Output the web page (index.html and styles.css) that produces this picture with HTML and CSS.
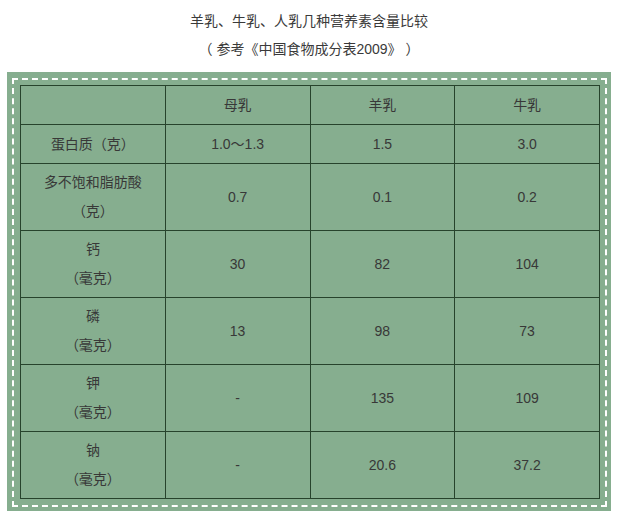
FILE: index.html
```html
<!DOCTYPE html>
<html lang="zh">
<head>
<meta charset="utf-8">
<link rel="stylesheet" href="styles.css">
</head>
<body>
<div class="title">
  <p>羊乳、牛乳、人乳几种营养素含量比较</p>
  <p>（ 参考《中国食物成分表2009》 ）</p>
</div>
<div class="frame">
  <div class="dash">
    <table class="grid">
      <tr class="short"><td></td><td>母乳</td><td>羊乳</td><td>牛乳</td></tr>
      <tr class="short"><td>蛋白质（克）</td><td>1.0～1.3</td><td>1.5</td><td>3.0</td></tr>
      <tr class="tall"><td>多不饱和脂肪酸<br>（克）</td><td>0.7</td><td>0.1</td><td>0.2</td></tr>
      <tr class="tall"><td>钙<br>（毫克）</td><td>30</td><td>82</td><td>104</td></tr>
      <tr class="tall"><td>磷<br>（毫克）</td><td>13</td><td>98</td><td>73</td></tr>
      <tr class="tall"><td>钾<br>（毫克）</td><td>-</td><td>135</td><td>109</td></tr>
      <tr class="tall"><td>钠<br>（毫克）</td><td>-</td><td>20.6</td><td>37.2</td></tr>
    </table>
  </div>
</div>
</body>
</html>
```
FILE: styles.css
```css
html, body {
  margin: 0;
  padding: 0;
  background: #ffffff;
}
body {
  font-family: "Liberation Sans", "Noto Sans CJK SC", sans-serif;
  color: #333333;
  font-size: 14px;
}
.title {
  padding-top: 7px;
  height: 72px;
  box-sizing: border-box;
  text-align: center;
}
.title p {
  margin: 0;
  line-height: 28px;
  font-size: 14px;
  color: #3a3a3a;
}
.frame {
  margin-left: 7px;
  width: 604px;
  box-sizing: border-box;
  padding: 6px 4px 4px 5px;
  background: #86ae8f;
}
.dash {
  border: 2px dashed #ffffff;
  padding: 5px 5px 6px 6px;
}
.grid {
  border-collapse: collapse;
  width: 580px;
  table-layout: fixed;
}
.grid td {
  border: 1px solid #27432c;
  text-align: center;
  vertical-align: middle;
  line-height: 29px;
  padding: 0;
  color: #383838;
}
.short td {
  height: 38px;
}
.tall td {
  height: 66px;
}
```
